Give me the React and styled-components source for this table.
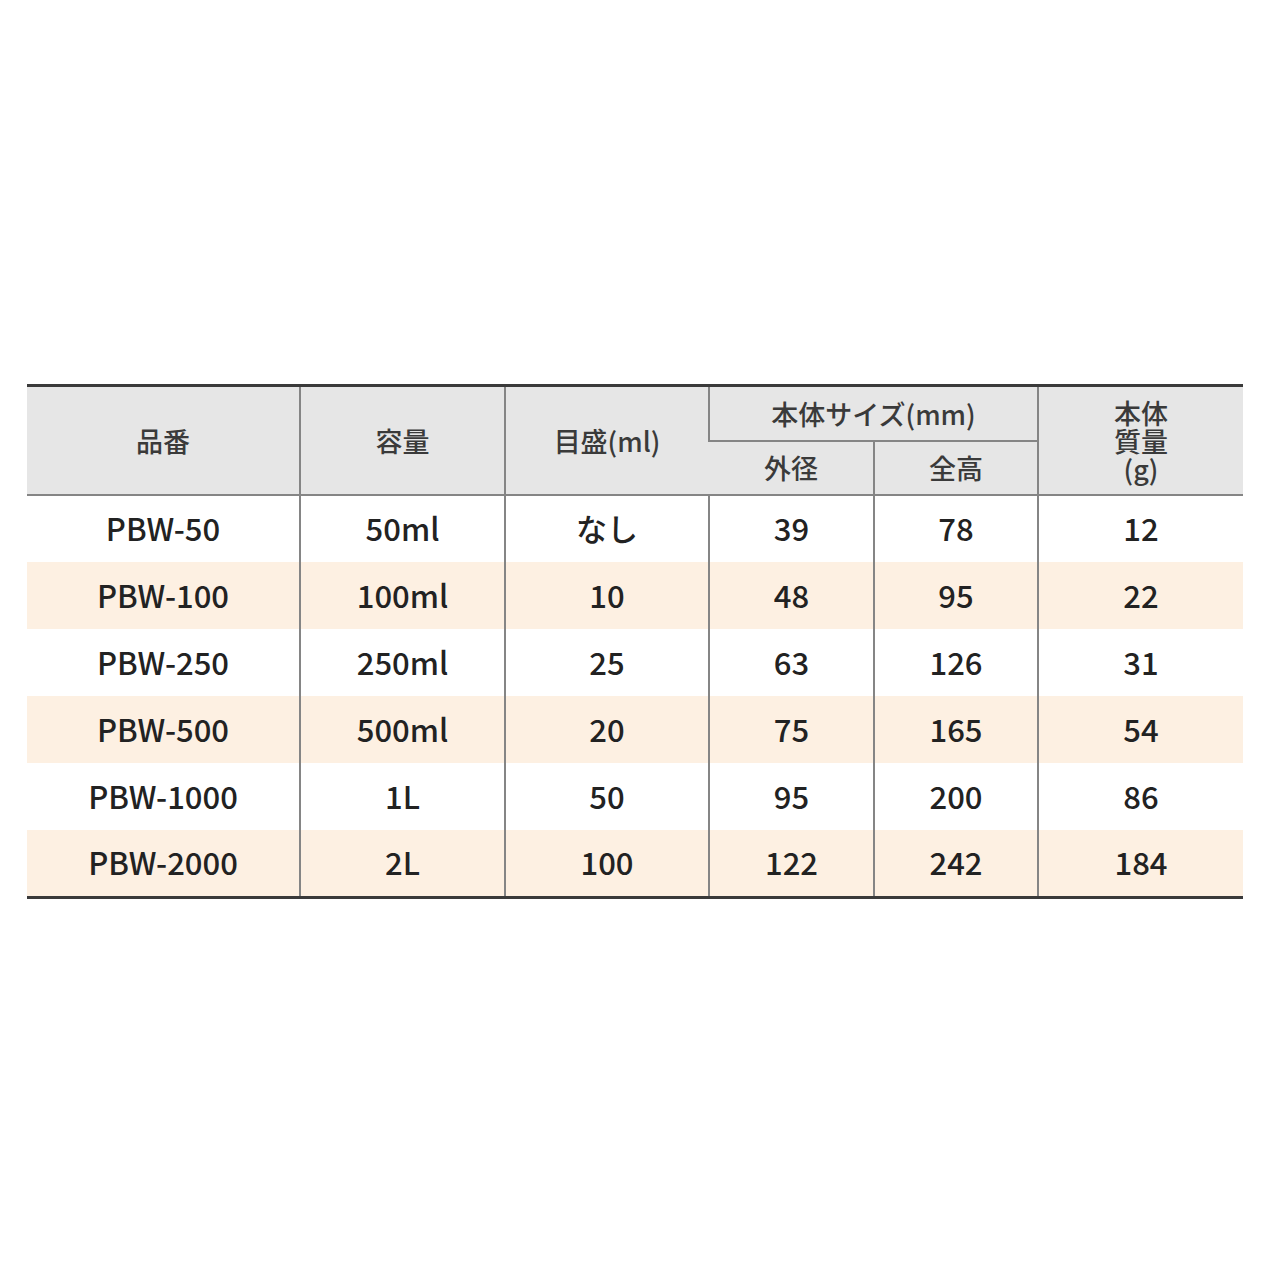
import React from "react";
import styled, { createGlobalStyle } from "styled-components";

const GlobalStyle = createGlobalStyle`
  html, body {
    margin: 0;
    padding: 0;
    background: #ffffff;
  }
  body {
    font-family: "Noto Sans CJK JP", "Noto Sans", sans-serif;
  }
`;

const columns = [273, 205, 204, 165, 164, 205];

const rows = [
  ["PBW-50", "50ml", "なし", "39", "78", "12"],
  ["PBW-100", "100ml", "10", "48", "95", "22"],
  ["PBW-250", "250ml", "25", "63", "126", "31"],
  ["PBW-500", "500ml", "20", "75", "165", "54"],
  ["PBW-1000", "1L", "50", "95", "200", "86"],
  ["PBW-2000", "2L", "100", "122", "242", "184"],
];

const Page = styled.div`
  width: 1280px;
  height: 1280px;
  padding: 384px 0 0 27px;
  box-sizing: border-box;
`;

const Table = styled.table`
  width: 1216px;
  border-collapse: collapse;
  table-layout: fixed;
  border-top: 3px solid #3a3a3a;
  border-bottom: 3px solid #3a3a3a;
`;

const Col = styled.col`
  width: ${(p) => p.$w}px;
`;

const Th = styled.th`
  background: #e6e6e6;
  color: #3a3a3a;
  font-weight: 500;
  font-size: 27px;
  line-height: 28px;
  text-align: center;
  vertical-align: middle;
  padding: 0;
  height: ${(p) => p.$h || 54}px;
  border-left: 2px solid #858585;
  border-bottom: 2px solid #858585;
  &:first-child {
    border-left: none;
  }
`;

const Tr = styled.tr`
  background: ${(p) => (p.$stripe ? "#fdf0e2" : "#ffffff")};
`;

const Td = styled.td`
  color: #222;
  font-size: 31px;
  font-weight: 500;
  line-height: 34px;
  text-align: center;
  vertical-align: middle;
  height: 67px;
  padding: 0 0 2px;
  box-sizing: border-box;
  border-left: 2px solid #858585;
  &:first-child {
    border-left: none;
  }
`;

export default function App() {
  return (
    <Page>
      <GlobalStyle />
      <Table>
        <colgroup>
          {columns.map((w, i) => (
            <Col key={i} $w={w} />
          ))}
        </colgroup>
        <thead>
          <tr>
            <Th rowSpan={2}>品番</Th>
            <Th rowSpan={2}>容量</Th>
            <Th rowSpan={2}>目盛(ml)</Th>
            <Th colSpan={2} $h={53}>本体サイズ(mm)</Th>
            <Th rowSpan={2}>
              本体
              <br />
              質量
              <br />
              (g)
            </Th>
          </tr>
          <tr>
            <Th $h={52}>外径</Th>
            <Th $h={52}>全高</Th>
          </tr>
        </thead>
        <tbody>
          {rows.map((r, i) => (
            <Tr key={r[0]} $stripe={i % 2 === 1}>
              {r.map((c, j) => (
                <Td key={j}>{c}</Td>
              ))}
            </Tr>
          ))}
        </tbody>
      </Table>
    </Page>
  );
}
